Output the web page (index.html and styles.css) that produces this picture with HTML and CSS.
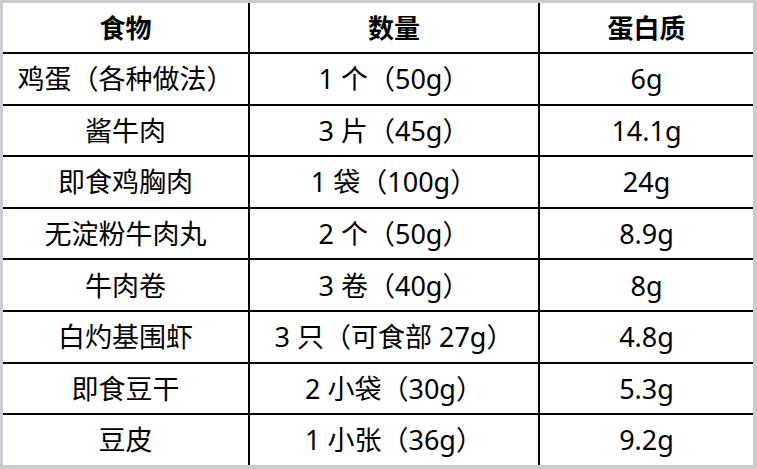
FILE: index.html
```html
<!DOCTYPE html>
<html lang="zh-CN">
<head>
<meta charset="utf-8">
<title>蛋白质表</title>
<link rel="stylesheet" href="styles.css">
</head>
<body>
<div class="frame">
  <div class="grid">
    <div class="cell head">食物</div>
    <div class="cell head">数量</div>
    <div class="cell head">蛋白质</div>

    <div class="cell">鸡蛋（各种做法）</div>
    <div class="cell">1 个（50g）</div>
    <div class="cell">6g</div>

    <div class="cell">酱牛肉</div>
    <div class="cell">3 片（45g）</div>
    <div class="cell">14.1g</div>

    <div class="cell">即食鸡胸肉</div>
    <div class="cell">1 袋（100g）</div>
    <div class="cell">24g</div>

    <div class="cell">无淀粉牛肉丸</div>
    <div class="cell">2 个（50g）</div>
    <div class="cell">8.9g</div>

    <div class="cell">牛肉卷</div>
    <div class="cell">3 卷（40g）</div>
    <div class="cell">8g</div>

    <div class="cell">白灼基围虾</div>
    <div class="cell">3 只（可食部 27g）</div>
    <div class="cell">4.8g</div>

    <div class="cell">即食豆干</div>
    <div class="cell">2 小袋（30g）</div>
    <div class="cell">5.3g</div>

    <div class="cell">豆皮</div>
    <div class="cell">1 小张（36g）</div>
    <div class="cell">9.2g</div>
  </div>
</div>
</body>
</html>
```
FILE: styles.css
```css
html, body {
  margin: 0;
  padding: 0;
}
body {
  background: #c9ccd1;
  width: 757px;
  height: 469px;
  overflow: hidden;
}
.frame {
  padding: 3px 4px 4px 3px;
}
.grid {
  background: #ffffff;
  width: 750px;
  height: 462px;
  display: grid;
  grid-template-columns: 245px 290px 215px;
  grid-template-rows: 49px repeat(8, 51.6px);
  font-family: "Noto Sans", "Noto Sans CJK SC", sans-serif;
  font-size: 27px;
  color: #000;
}
.cell {
  box-sizing: border-box;
  display: flex;
  align-items: center;
  justify-content: center;
  white-space: nowrap;
  border-top: 2px solid #000;
  border-left: 2px solid #000;
  line-height: 1;
}
.cell:nth-child(3n+1) {
  border-left: none;
}
.head {
  border-top: none;
  font-weight: 700;
  font-size: 26px;
}
```
